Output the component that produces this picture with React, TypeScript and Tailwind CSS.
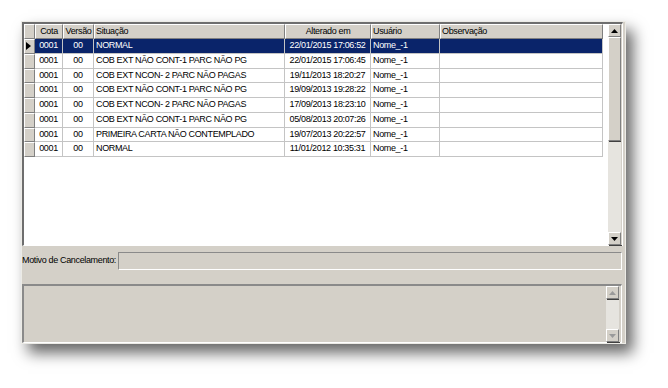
import React from "react";

type Row = {
  cota: string;
  versao: string;
  situacao: string;
  alterado: string;
  usuario: string;
  obs: string;
};

const rows: Row[] = [
  { cota: "0001", versao: "00", situacao: "NORMAL", alterado: "22/01/2015 17:06:52", usuario: "Nome_-1", obs: "" },
  { cota: "0001", versao: "00", situacao: "COB EXT NÃO CONT-1 PARC NÃO PG", alterado: "22/01/2015 17:06:45", usuario: "Nome_-1", obs: "" },
  { cota: "0001", versao: "00", situacao: "COB EXT NCON- 2 PARC NÃO PAGAS", alterado: "19/11/2013 18:20:27", usuario: "Nome_-1", obs: "" },
  { cota: "0001", versao: "00", situacao: "COB EXT NÃO CONT-1 PARC NÃO PG", alterado: "19/09/2013 19:28:22", usuario: "Nome_-1", obs: "" },
  { cota: "0001", versao: "00", situacao: "COB EXT NCON- 2 PARC NÃO PAGAS", alterado: "17/09/2013 18:23:10", usuario: "Nome_-1", obs: "" },
  { cota: "0001", versao: "00", situacao: "COB EXT NÃO CONT-1 PARC NÃO PG", alterado: "05/08/2013 20:07:26", usuario: "Nome_-1", obs: "" },
  { cota: "0001", versao: "00", situacao: "PRIMEIRA CARTA NÃO CONTEMPLADO", alterado: "19/07/2013 20:22:57", usuario: "Nome_-1", obs: "" },
  { cota: "0001", versao: "00", situacao: "NORMAL", alterado: "11/01/2012 10:35:31", usuario: "Nome_-1", obs: "" },
];

const cols: { key: keyof Row; title: string; w: string; head: string; cell: string }[] = [
  { key: "cota", title: "Cota", w: "w-[28px]", head: "justify-center", cell: "justify-center" },
  { key: "versao", title: "Versão", w: "w-[31px]", head: "justify-center", cell: "justify-center" },
  { key: "situacao", title: "Situação", w: "w-[191px]", head: "justify-start", cell: "justify-start" },
  { key: "alterado", title: "Alterado em", w: "w-[86px]", head: "justify-center", cell: "justify-center" },
  { key: "usuario", title: "Usuário", w: "w-[69px]", head: "justify-start", cell: "justify-start" },
  { key: "obs", title: "Observação", w: "w-[163px]", head: "justify-start", cell: "justify-start" },
];

const raised =
  "bg-[#d4d0c8] border-t border-l border-r border-b border-t-white border-l-white border-r-[#808080] border-b-[#808080]";

const Arrow = ({ up, grey }: { up?: boolean; grey?: boolean }) => (
  <svg width="7" height="4" viewBox="0 0 7 4">
    {up ? (
      <polygon points="3.5,0 7,4 0,4" fill={grey ? "#9a9a9a" : "#000"} />
    ) : (
      <polygon points="0,0 7,0 3.5,4" fill={grey ? "#9a9a9a" : "#000"} />
    )}
  </svg>
);

const ScrollBtn = ({ up, grey }: { up?: boolean; grey?: boolean }) => (
  <div className={`h-[13px] w-[13px] shrink-0 flex items-center justify-center ${raised} shadow-[1px_1px_0_#404040]`}>
    <Arrow up={up} grey={grey} />
  </div>
);

const App = () => {
  return (
    <div className="w-[668px] h-[388px] bg-white pl-[21px] pt-[21px] font-['Liberation_Sans',Arial,sans-serif] text-[9px] tracking-[-0.35px] text-black">
      <div className="w-[605px] h-[323px] bg-[#d4d0c8] border border-[#ecebe6] shadow-[7px_9px_14px_rgba(0,0,0,0.6)] flex flex-col">
        {/* grid */}
        <div className="w-[601px] h-[224px] flex border-t-2 border-l-2 border-b border-r border-t-[#6e6e6e] border-l-[#6e6e6e] border-b-white border-r-white">
          <div className="w-[584px] h-full bg-white flex flex-col">
            <div className="flex h-[15px]">
              <div className={`w-[11px] h-full ${raised}`} />
              {cols.map((c) => (
                <div key={c.key} className={`${c.w} h-full flex items-center px-[1px] whitespace-nowrap ${c.head} ${raised}`}>
                  {c.title}
                </div>
              ))}
            </div>
            {rows.map((r, i) => (
              <div key={i} className="flex h-[14.75px]">
                <div className={`w-[11px] h-full flex items-center ${raised}`}>
                  {i === 0 && (
                    <svg width="5" height="8" viewBox="0 0 5 8" className="ml-[1px]">
                      <polygon points="0,0 5,4 0,8" fill="#000" />
                    </svg>
                  )}
                </div>
                {cols.map((c) => (
                  <div
                    key={c.key}
                    className={`${c.w} h-full flex items-center px-[2px] whitespace-nowrap overflow-hidden border-r border-b border-[#c4c4c4] ${c.cell} ${
                      i === 0 ? "bg-[#0a246a] text-white" : "bg-white"
                    }`}
                  >
                    {r[c.key]}
                  </div>
                ))}
              </div>
            ))}
          </div>
          <div className="w-[13px] h-full flex flex-col bg-[#e6e4df]">
            <ScrollBtn up />
            <div className={`h-[104px] w-[13px] ${raised} shadow-[1px_1px_0_#404040]`} />
            <div className="flex-1" />
            <ScrollBtn />
          </div>
          <div className="w-[1px] h-full bg-[#d4d0c8]" />
        </div>

        {/* motivo */}
        <div className="flex items-center mt-[6px] h-[18px]">
          <div className="w-[96px] whitespace-nowrap">Motivo de Cancelamento:</div>
          <div className="w-[504px] h-full bg-[#d4d0c8] border-t border-l border-b border-r border-t-[#8a8a8a] border-l-[#8a8a8a] border-b-white border-r-white" />
        </div>

        {/* memo */}
        <div className="mt-[14px] w-[600px] h-[59px] flex border-t-2 border-l-2 border-b border-r border-t-[#8a8a8a] border-l-[#8a8a8a] border-b-white border-r-white">
          <div className="flex-1 h-full bg-[#d4d0c8]" />
          <div className="w-[13px] h-full flex flex-col bg-[#e6e4df]">
            <ScrollBtn up grey />
            <div className="flex-1" />
            <ScrollBtn grey />
          </div>
          <div className="w-[2px] h-full bg-[#d4d0c8]" />
        </div>
      </div>
    </div>
  );
};

export default App;
